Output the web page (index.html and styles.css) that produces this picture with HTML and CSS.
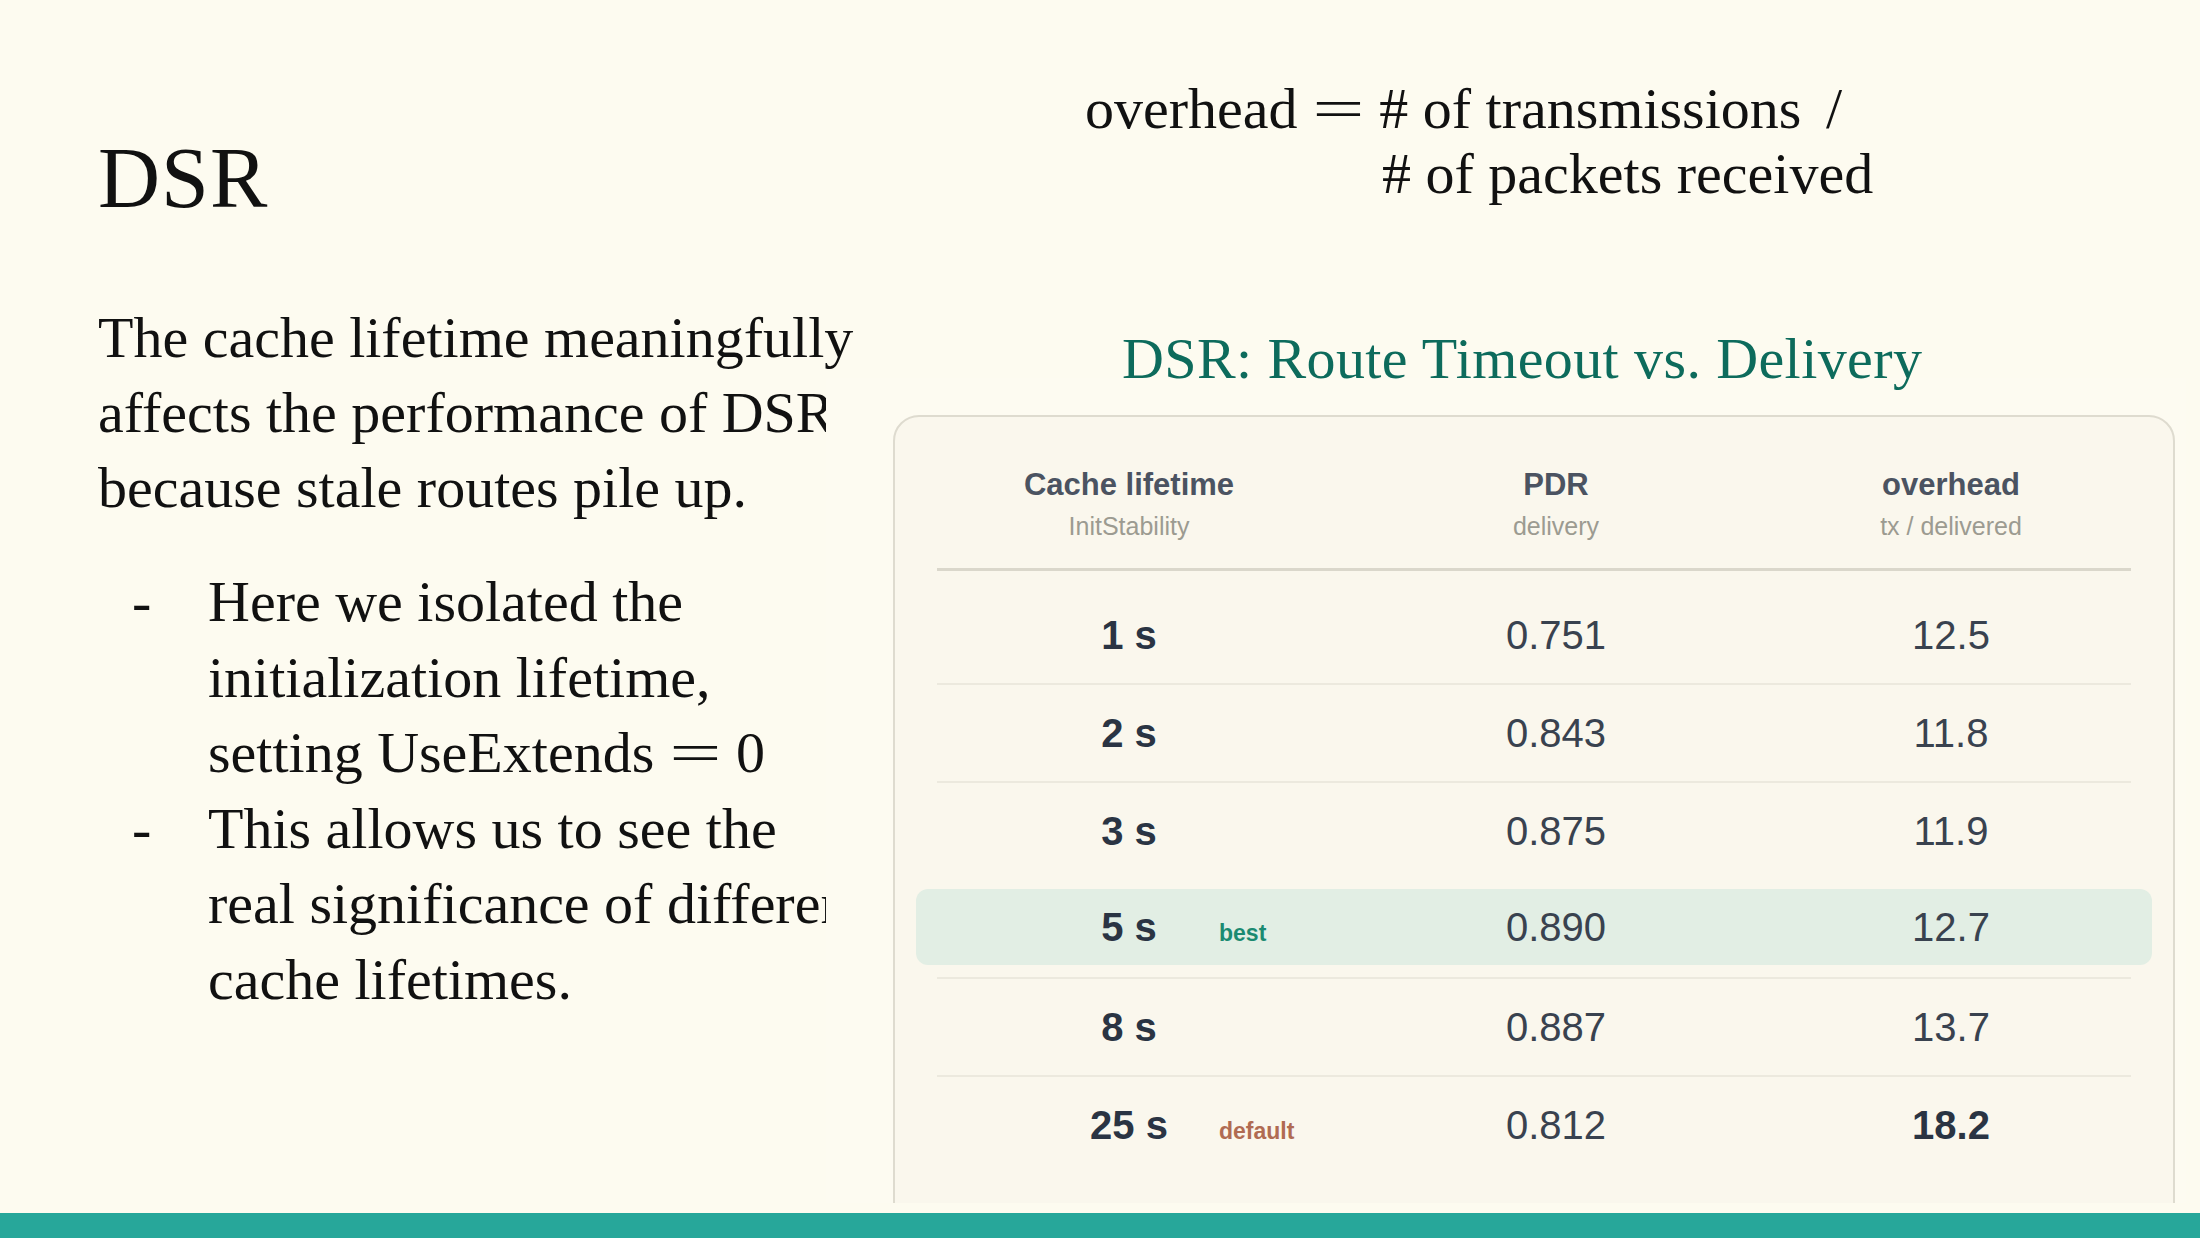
FILE: index.html
```html
<!DOCTYPE html>
<html lang="en">
<head>
<meta charset="utf-8">
<title>DSR</title>
<link rel="stylesheet" href="styles.css">
</head>
<body>
<div class="slide">
  <div class="content">
    <div class="left">
      <h1 class="title">DSR</h1>
      <p class="lead">The cache lifetime meaningfully<br>affects the performance of DSR<br>because stale routes pile up.</p>
      <ul class="bullets">
        <li><span class="dash">-</span><span class="btext">Here we isolated the<br>initialization lifetime,<br>setting UseExtends <span class="eq">=</span> 0</span></li>
        <li><span class="dash">-</span><span class="btext">This allows us to see the<br>real significance of different<br>cache lifetimes.</span></li>
      </ul>
    </div>
    <div class="right">
      <div class="formula">
        <div class="fline">overhead <span class="eq">=</span> # of transmissions <span class="slash">/</span></div>
        <div class="fline indent"># of packets received</div>
      </div>
      <h2 class="chart-title">DSR: Route Timeout vs. Delivery</h2>
    </div>
  </div>
  <div class="figure">
    <div class="card">
      <div class="thead">
        <div class="th"><div class="hl">Cache lifetime</div><div class="hs">InitStability</div></div>
        <div class="th"><div class="hl">PDR</div><div class="hs">delivery</div></div>
        <div class="th"><div class="hl">overhead</div><div class="hs">tx / delivered</div></div>
      </div>
      <div class="tbody">
        <div class="row first"><div class="cell key">1 s</div><div class="cell">0.751</div><div class="cell">12.5</div></div>
        <div class="row sep"><div class="cell key">2 s</div><div class="cell">0.843</div><div class="cell">11.8</div></div>
        <div class="row sep"><div class="cell key">3 s</div><div class="cell">0.875</div><div class="cell">11.9</div></div>
        <div class="row best"><div class="cell key">5 s<span class="tag tag-best">best</span></div><div class="cell">0.890</div><div class="cell">12.7</div></div>
        <div class="row sep"><div class="cell key">8 s</div><div class="cell">0.887</div><div class="cell">13.7</div></div>
        <div class="row sep"><div class="cell key">25 s<span class="tag tag-default">default</span></div><div class="cell">0.812</div><div class="cell strong">18.2</div></div>
      </div>
    </div>
  </div>
  <div class="bar"></div>
</div>
</body>
</html>
```

FILE: styles.css
```css
html, body {
  margin: 0;
  padding: 0;
  background: #fdfbf0;
}

.slide {
  width: 2200px;
  height: 1238px;
  position: relative;
  overflow: hidden;
  display: flex;
  flex-direction: column;
  background: #fdfbf0;
  font-family: "Liberation Serif", "Times New Roman", serif;
  color: #111;
}

.content {
  flex: 1;
  display: grid;
  grid-template-columns: 1085px 1fr;
}

.left {
  padding-left: 98px;
  padding-top: 135px;
}

.title {
  margin: 0;
  font-size: 86px;
  line-height: 86px;
  font-weight: normal;
  letter-spacing: 1px;
}

.lead {
  margin: 79px 0 0 0;
  font-size: 58px;
  line-height: 75px;
  white-space: nowrap;
}

.bullets {
  list-style: none;
  margin: 39px 0 0 0;
  padding: 0;
  font-size: 58px;
  line-height: 75.5px;
}

.bullets li {
  display: flex;
  white-space: nowrap;
}

.dash {
  width: 110px;
  padding-left: 34px;
  box-sizing: border-box;
  flex: none;
}

.eq {
  display: inline-block;
  transform: scaleX(1.6);
  margin: 0 10px;
}

.slash {
  margin-left: 10px;
}

.right {
  padding-top: 76px;
}

.formula {
  font-size: 58px;
  line-height: 65px;
  white-space: nowrap;
}

.fline.indent {
  padding-left: 297px;
}

.chart-title {
  position: relative;
  z-index: 2;
  margin: 115px 0 0 37px;
  font-size: 58px;
  line-height: 75px;
  font-weight: normal;
  letter-spacing: 0.4px;
  color: #0d6b5c;
  white-space: nowrap;
}

.figure {
  position: absolute;
  z-index: 1;
  left: 826px;
  top: 378px;
  width: 1360px;
  height: 825px;
  background: #fdfbf1;
  overflow: hidden;
  padding: 37px 0 0 67px;
  box-sizing: border-box;
}

.card {
  width: 1282px;
  height: 900px;
  box-sizing: border-box;
  border: 2px solid #dedbcf;
  border-radius: 26px;
  background: #faf7ed;
  padding: 0 42px;
  font-family: "Liberation Sans", Arial, sans-serif;
}

.thead,
.row {
  display: grid;
  grid-template-columns: 384px 470px 320px;
  text-align: center;
}

.thead {
  padding: 49px 0 26px;
  border-bottom: 3px solid #dad7cb;
}

.hl {
  font-size: 31px;
  line-height: 38px;
  font-weight: bold;
  color: #4b5361;
}

.hs {
  margin-top: 6px;
  font-size: 25px;
  line-height: 32px;
  color: #9c9b91;
}

.row {
  box-sizing: border-box;
  height: 98px;
  align-items: center;
}

.row.first {
  height: 112px;
  padding-top: 16px;
}

.row.sep {
  border-top: 2px solid #ece9de;
}

.row.best {
  height: 76px;
  margin: 10px -21px 12px;
  padding: 0 21px;
  background: #e2eee4;
  border-radius: 12px;
}

.cell {
  position: relative;
  font-size: 40px;
  line-height: 48px;
  color: #39424f;
}

.cell.key {
  font-weight: bold;
  color: #2a3443;
}

.cell.strong {
  font-weight: bold;
  color: #2a3443;
}

.tag {
  position: absolute;
  left: 282px;
  top: 6px;
  font-size: 23px;
  line-height: 48px;
  font-weight: bold;
}

.tag-best {
  color: #1b8a71;
}

.tag-default {
  color: #b06b52;
}

.bar {
  height: 25px;
  flex: none;
  background: #27a79a;
}
```
